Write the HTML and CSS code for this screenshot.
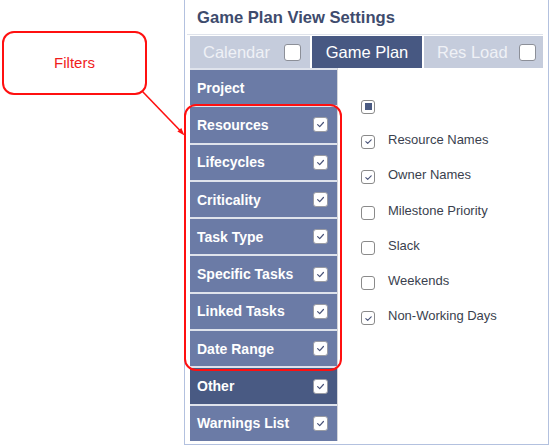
FILE: index.html
```html
<!DOCTYPE html>
<html>
<head>
<meta charset="utf-8">
<link rel="stylesheet" href="styles.css">
</head>
<body>
<div class="page">
  <div class="notes">
    <div class="callout">Filters</div>
  </div>
  <section class="panel">
    <header class="panel-head">Game Plan View Settings</header>
    <nav class="tabs">
      <div class="tab tab-cal"><span>Calendar</span><span class="tbox"></span></div>
      <div class="tab tab-active">Game Plan</div>
      <div class="tab tab-res"><span>Res Load</span><span class="tbox"></span></div>
    </nav>
    <div class="body">
      <ul class="menu">
        <li class="item">Project</li>
        <li class="item"><span>Resources</span><span class="mbox"><svg viewBox="0 0 15 15"><path d="M4.2 7.6 L6.6 10 L10.9 5.2"/></svg></span></li>
        <li class="item"><span>Lifecycles</span><span class="mbox"><svg viewBox="0 0 15 15"><path d="M4.2 7.6 L6.6 10 L10.9 5.2"/></svg></span></li>
        <li class="item"><span>Criticality</span><span class="mbox"><svg viewBox="0 0 15 15"><path d="M4.2 7.6 L6.6 10 L10.9 5.2"/></svg></span></li>
        <li class="item"><span>Task Type</span><span class="mbox"><svg viewBox="0 0 15 15"><path d="M4.2 7.6 L6.6 10 L10.9 5.2"/></svg></span></li>
        <li class="item"><span>Specific Tasks</span><span class="mbox"><svg viewBox="0 0 15 15"><path d="M4.2 7.6 L6.6 10 L10.9 5.2"/></svg></span></li>
        <li class="item"><span>Linked Tasks</span><span class="mbox"><svg viewBox="0 0 15 15"><path d="M4.2 7.6 L6.6 10 L10.9 5.2"/></svg></span></li>
        <li class="item"><span>Date Range</span><span class="mbox"><svg viewBox="0 0 15 15"><path d="M4.2 7.6 L6.6 10 L10.9 5.2"/></svg></span></li>
        <li class="item item-active"><span>Other</span><span class="mbox"><svg viewBox="0 0 15 15"><path d="M4.2 7.6 L6.6 10 L10.9 5.2"/></svg></span></li>
        <li class="item"><span>Warnings List</span><span class="mbox"><svg viewBox="0 0 15 15"><path d="M4.2 7.6 L6.6 10 L10.9 5.2"/></svg></span></li>
      </ul>
      <div class="options">
        <div class="opt"><span class="cbox cbox-mixed"><span class="fill"></span></span></div>
        <div class="opt"><span class="cbox"><svg viewBox="0 0 14 14"><path d="M3.6 7.2 L6 9.5 L10.4 4.8"/></svg></span><span class="lbl">Resource Names</span></div>
        <div class="opt"><span class="cbox"><svg viewBox="0 0 14 14"><path d="M3.6 7.2 L6 9.5 L10.4 4.8"/></svg></span><span class="lbl">Owner Names</span></div>
        <div class="opt"><span class="cbox"></span><span class="lbl">Milestone Priority</span></div>
        <div class="opt"><span class="cbox"></span><span class="lbl">Slack</span></div>
        <div class="opt"><span class="cbox"></span><span class="lbl">Weekends</span></div>
        <div class="opt"><span class="cbox"><svg viewBox="0 0 14 14"><path d="M3.6 7.2 L6 9.5 L10.4 4.8"/></svg></span><span class="lbl">Non-Working Days</span></div>
      </div>
    </div>
  </section>
</div>
<div class="filter-ring"></div>
<svg class="arrow" viewBox="0 0 550 446" width="550" height="446">
  <line x1="142" y1="91" x2="181" y2="131.5"/>
  <polygon points="184.5,135.5 177.4,131.6 181.3,128"/>
</svg>
</body>
</html>
```

FILE: styles.css
```css
* { box-sizing: border-box; }
html, body { margin: 0; padding: 0; }
body {
  width: 550px;
  height: 446px;
  background: #ffffff;
  font-family: "Liberation Sans", Arial, sans-serif;
  position: relative;
  overflow: hidden;
}
.page {
  display: flex;
  align-items: flex-start;
}
.notes {
  width: 184px;
  flex: none;
  padding: 31px 0 0 2px;
}
.callout {
  width: 145px;
  height: 64px;
  border: 2px solid #ff1010;
  border-radius: 12px;
  display: flex;
  align-items: center;
  justify-content: center;
  color: #f01c1c;
  font-size: 15px;
  padding-bottom: 1px;
}
.panel {
  width: 365px;
  height: 445px;
  flex: none;
  border: 1px solid #b3c1df;
  border-top: none;
  padding: 0 5px 0 5px;
  display: flex;
  flex-direction: column;
}
.panel-head {
  height: 35px;
  padding: 8px 0 0 10px;
  line-height: 20px;
  font-size: 16.6px;
  font-weight: bold;
  color: #3e4b6d;
  border-bottom: 1px solid #dfe3eb;
  margin-left: -3px;
}
.tabs {
  display: flex;
  gap: 2px;
  margin-top: 1px;
  height: 32px;
}
.tab {
  display: flex;
  align-items: center;
  font-size: 16.5px;
  background: #c5ccdc;
  color: #eff1f6;
  flex: none;
}
.tab-cal {
  width: 120px;
  padding: 0 9px 0 13px;
  justify-content: space-between;
}
.tab-active {
  width: 110px;
  background: #475882;
  color: #ffffff;
  justify-content: center;
}
.tab-res {
  flex: 1;
  padding: 0 7px 0 13px;
  justify-content: space-between;
}
.tbox {
  width: 17px;
  height: 17px;
  background: #ffffff;
  border: 1.5px solid #8c8f98;
  border-radius: 3px;
}
.body {
  display: flex;
  flex: 1;
}
.menu {
  list-style: none;
  margin: 0;
  padding: 2px 0 0 0;
  width: 148px;
  flex: none;
  display: flex;
  flex-direction: column;
  gap: 2px;
  align-self: flex-start;
  background: #dfe3ec;
  border-right: 1px solid #d3d5da;
}
.item {
  height: 35.3px;
  background: #6b7ba6;
  color: #ffffff;
  font-size: 14px;
  font-weight: bold;
  display: flex;
  align-items: center;
  justify-content: space-between;
  padding: 0 9px 0 7px;
}
.item-active {
  background: #495a83;
}
.mbox {
  width: 15px;
  height: 15px;
  background: #ffffff;
  border: 1px solid #9a9ca4;
  border-radius: 3px;
  display: flex;
}
.mbox svg {
  width: 13px;
  height: 13px;
}
.mbox path, .cbox path {
  fill: none;
  stroke: #4a5479;
  stroke-width: 1.4;
  stroke-linecap: round;
  stroke-linejoin: round;
}
.options {
  flex: 1;
  padding: 21px 0 0 23px;
  display: flex;
  flex-direction: column;
}
.opt {
  height: 35.3px;
  display: flex;
  align-items: center;
}
.cbox {
  width: 14px;
  height: 14px;
  border: 1.5px solid #8a8a8a;
  border-radius: 3px;
  background: #ffffff;
  display: flex;
  align-items: center;
  justify-content: center;
  flex: none;
}
.cbox svg {
  width: 11px;
  height: 11px;
}
.cbox-mixed .fill {
  width: 7px;
  height: 7px;
  background: #4a5a82;
}
.lbl {
  margin-left: 13px;
  font-size: 13px;
  color: #3a3f4e;
  margin-bottom: 5px;
}
.filter-ring {
  position: absolute;
  left: 184px;
  top: 104px;
  width: 158px;
  height: 267px;
  border: 2px solid #ff1010;
  border-radius: 12px;
  pointer-events: none;
}
.arrow {
  position: absolute;
  left: 0;
  top: 0;
  pointer-events: none;
}
.arrow line {
  stroke: #ff1010;
  stroke-width: 1.6;
}
.arrow polygon {
  fill: #ff1010;
}
```
